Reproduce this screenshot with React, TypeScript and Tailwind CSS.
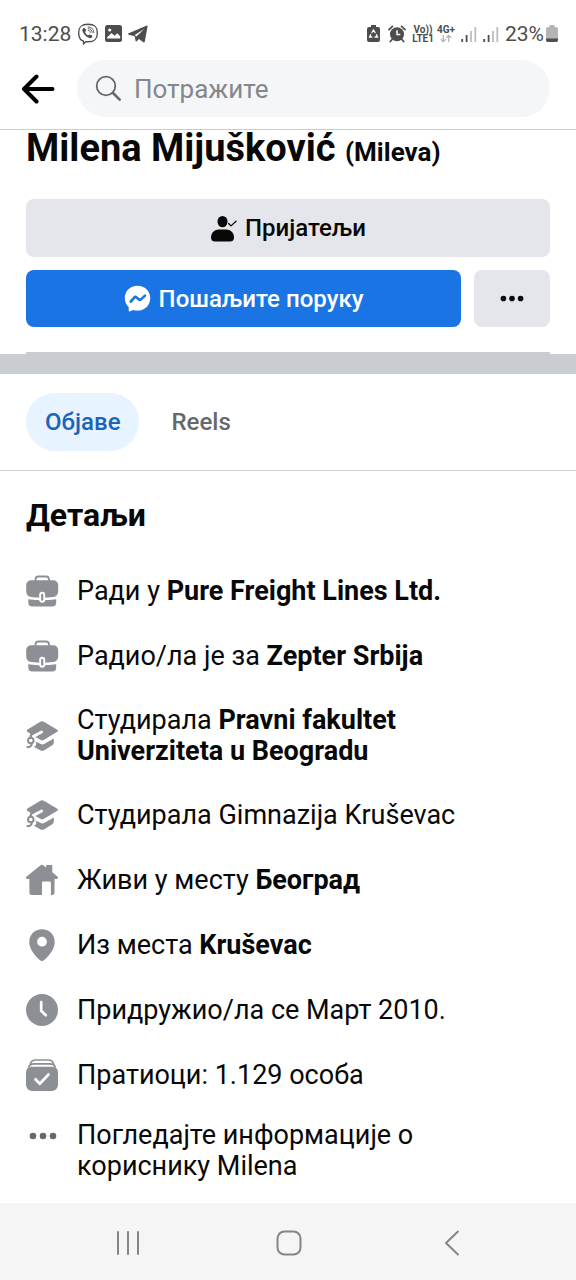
import type { ReactNode } from "react";

const BriefcaseIcon = () => (
  <svg viewBox="0 0 33 33" className="size-[33px]" fill="#8c8f94" aria-hidden="true">
    <path d="M9.500 6V4.500a3 3 0 0 1 3-3h7.500a3 3 0 0 1 3 3V6" fill="none" stroke="#8c8f94" strokeWidth="1.800" />
    <path d="M5 5.300h22.500A4.700 4.700 0 0 1 32.200 10v6.500c0 3-2 5.200-5 5.500-7.500.9-14.600.9-22.100 0-3-.3-4.900-2.500-4.900-5.500V10A4.700 4.700 0 0 1 5 5.300z" />
    <path d="M2.300 24.200c9.300 1.400 18.600 1.400 27.900 0v3.300a4 4 0 0 1-4 4H6.300a4 4 0 0 1-4-4z" />
    <rect x="13.200" y="16.800" width="6" height="11" rx="3" fill="#fff" />
    <rect x="15.100" y="18.800" width="2.200" height="7" rx="1.100" />
  </svg>
);

const GraduationIcon = () => (
  <svg viewBox="0 0 33 33" className="size-[33px]" fill="#8c8f94" aria-hidden="true">
    <path d="M1.500 9.600 14.800 1.600a3 3 0 0 1 3 .1l13.500 8a1.200 1.200 0 0 1 0 2.100l-13.800 8.300a2.800 2.800 0 0 1-2.700 0l-5.500-3 7-3.800a1.400 1.400 0 0 0-1.300-2.500L6.800 15 1.500 11.900a1.300 1.300 0 0 1 0-2.300z" />
    <path d="M9 21.300l5.300 2.500a4.500 4.500 0 0 0 4.300 0l9.200-5.400v4.200a3 3 0 0 1-1.500 2.600l-8.100 5a4 4 0 0 1-4 0l-6.400-3.500a3 3 0 0 0 1.200-5.400z" />
    <circle cx="4.800" cy="20.500" r="2.800" fill="none" stroke="#8c8f94" strokeWidth="2" />
    <path d="M4.600 17.700c-.1-2 .6-3.400 2.300-4.400M5.600 23.200c.3 2-.6 3.800-4 4" fill="none" stroke="#8c8f94" strokeWidth="2.200" strokeLinecap="round" />
  </svg>
);

const HomeIcon = () => (
  <svg viewBox="0 0 33 33" className="size-[33px]" fill="#8c8f94" aria-hidden="true">
    <path d="M14.300 1.500a2.700 2.700 0 0 1 3.300 0l2.500 2V2c0-.6.400-1 1-1h4.200c.6 0 1 .4 1 1v6.300l5 4.300c1.200 1 .7 2.500-.8 2.500h-2v14a1.800 1.800 0 0 1-1.800 1.800h-1.800V18.800c0-.8-.5-1.300-1.300-1.300h-6.300c-.8 0-1.300.5-1.300 1.300v12.100H5.200a1.800 1.800 0 0 1-1.800-1.800v-14h-2c-1.500 0-2-1.500-.8-2.500z" />
  </svg>
);

const PinIcon = () => (
  <svg viewBox="0 0 33 33" className="size-[33px]" fill="#8c8f94" aria-hidden="true">
    <path fillRule="evenodd" d="M16 .300C8.800.300 3.300 5.700 3.300 12.700c0 7.300 5.200 13.400 10.500 18.400a3.200 3.200 0 0 0 4.400 0c5.300-5 10.500-11.100 10.500-18.400C28.700 5.700 23.200.300 16 .300zm0 17.300a4.900 4.900 0 1 1 0-9.800 4.900 4.900 0 0 1 0 9.800z" />
  </svg>
);

const ClockIcon = () => (
  <svg viewBox="0 0 33 33" className="size-[33px]" aria-hidden="true">
    <circle cx="16" cy="16" r="16" fill="#8c8f94" />
    <path d="M15.200 8v8.700l4.600 4.600" fill="none" stroke="#fff" strokeWidth="2.700" strokeLinecap="round" strokeLinejoin="round" />
  </svg>
);

const FollowersIcon = () => (
  <svg viewBox="0 0 33 33" className="size-[33px]" aria-hidden="true">
    <path d="M4.200 5.500C4.900 2 6.700 1 9.700 1h12.600c3 0 4.800 1 5.500 4.500" fill="none" stroke="#8c8f94" strokeWidth="1.700" />
    <path d="M2.500 8.500c.7-2.600 2.700-3.700 6-3.700h15c3.300 0 5.300 1.100 6 3.700" fill="none" stroke="#8c8f94" strokeWidth="1.700" />
    <path d="M6.500 7.700h19c4.500 0 6.500 2 6.500 6.500v10.300c0 5-2.300 7.500-7.500 7.500h-17C2.300 32 0 29.500 0 24.500V14.200c0-4.500 2-6.500 6.500-6.500z" fill="#8c8f94" />
    <path d="M9.500 20.200l4.300 4.600 8.600-9.200" fill="none" stroke="#fff" strokeWidth="2.800" strokeLinecap="round" strokeLinejoin="round" />
  </svg>
);

const Dots = ({ className }: { className: string }) => (
  <svg viewBox="0 0 28 8" className={className} fill="currentColor" aria-hidden="true">
    <circle cx="4" cy="4" r="3.300" />
    <circle cx="14" cy="4" r="3.300" />
    <circle cx="24" cy="4" r="3.300" />
  </svg>
);

const Signal = () => (
  <svg viewBox="0 0 16 16" className="size-4" aria-hidden="true">
    <path d="M1.200 16v-3M5.600 16V9" stroke="#4d4d4d" strokeWidth="1.800" />
    <path d="M10 16V5M14.300 16V1" stroke="#bdbdbd" strokeWidth="1.800" />
  </svg>
);

const StatusBar = () => (
  <div className="flex h-[60px] items-center justify-between pt-[7px] pr-[18px] pl-[19px] text-[#4d4d4d]">
    <div className="flex items-center gap-[6px]">
      <span className="text-[21px] leading-6">13:28</span>
      <svg viewBox="0 0 22 22" className="size-[22px]" fill="none" stroke="currentColor" aria-hidden="true">
        <path d="M11 1.200c6.200 0 9.300 2 9.300 8.800s-3.100 8.800-9.300 8.800c-.8 0-1.500 0-2.200-.1L6.500 21v-2.800C3 17 1.700 14.500 1.700 10 1.700 3.200 4.800 1.200 11 1.200z" strokeWidth="1.400" strokeLinejoin="round" />
        <path d="M6.300 5.300c.9-.7 1.500-.3 2.200.8.800 1.100.8 1.700.1 2.200-.9.700-.4 1.500.6 2.600 1.200 1.300 2 1.800 2.700 1 .6-.7 1.200-.7 2.300.1 1.200.8 1.500 1.400.8 2.200-.9 1.200-1.900 1.300-3.300.6-2.900-1.500-4.900-3.700-6-6.400-.5-1.300-.3-2.400.6-3.100z" fill="currentColor" stroke="none" />
        <path d="M11.300 7.400c1.200.1 1.900.8 2 2M11.200 5.600c2.400.1 3.800 1.500 3.900 3.900M11.100 3.900c3.500.1 5.700 2.200 5.800 5.700" strokeWidth=".9" strokeLinecap="round" />
      </svg>
      <svg viewBox="0 0 17 17" className="size-[17px]" aria-hidden="true">
        <rect width="17" height="17" rx="2.500" fill="currentColor" />
        <path d="M2 12.500 6.500 8l3 2.800 2.700-2.600 3 3v2.300H2z" fill="#fff" />
        <circle cx="4.700" cy="5" r="1.600" fill="#fff" />
      </svg>
      <svg viewBox="0 0 20 18" className="h-[18px] w-5" fill="currentColor" aria-hidden="true">
        <path d="M.700 8.300 18.200.700c.9-.4 1.500.1 1.300 1L16.800 16.500c-.2 1-.9 1.200-1.700.6l-4.200-3.100-2.200 2.300c-.5.500-1 .3-1.100-.3l-.9-4.800L.8 9.700C-.1 9.400-.2 8.700.7 8.300zm7.700 3.300L16.200 4 6.700 9.900z" />
      </svg>
    </div>
    <div className="flex items-center">
      <svg viewBox="0 0 13 18" className="mr-2 h-[18px] w-[13px]" aria-hidden="true">
        <path d="M4 0h5v2h2a2 2 0 0 1 2 2v11a2 2 0 0 1-2 2H2a2 2 0 0 1-2-2V4a2 2 0 0 1 2-2h2z" fill="currentColor" />
        <path d="M4.600 8 6.500 5l1.900 3M9.300 9.300l1.200 2.700H7.500M5.300 12H2.600l1.200-2.700" fill="none" stroke="#fff" strokeWidth="1.300" />
      </svg>
      <svg viewBox="0 0 18 18" className="mr-[6px] size-[18px]" aria-hidden="true">
        <circle cx="9" cy="9.300" r="7" fill="currentColor" />
        <path d="M1 4.600 4.400 1.400M17 4.600l-3.400-3.200M4 14.500l-1.700 2M14 14.500l1.700 2" stroke="currentColor" strokeWidth="1.800" strokeLinecap="round" />
        <path d="M9 5.300v4.300h3.300" fill="none" stroke="#fff" strokeWidth="1.500" />
      </svg>
      <span className="mr-[3px] flex flex-col items-center text-[10px] leading-[9px] font-bold">
        <span>Vo))</span>
        <span>LTE1</span>
      </span>
      <span className="mr-[6px] flex flex-col items-center text-[10px] leading-[9px] font-bold">
        <span>4G+</span>
        <svg viewBox="0 0 12 9" className="h-[9px] w-3" fill="none" stroke="#b5b5b5" strokeWidth="1.300" aria-hidden="true">
          <path d="M3.300 1v6.500M.8 5.200l2.500 2.500 2.500-2.500M8.700 8V1.500M6.200 3.800l2.500-2.500 2.500 2.500" />
        </svg>
      </span>
      <div className="flex gap-[6px]">
        <Signal />
        <Signal />
      </div>
      <span className="ml-[6px] text-[21px] leading-6">23%</span>
      <svg viewBox="0 0 12 18" className="ml-[2px] h-[18px] w-3" aria-hidden="true">
        <path d="M3.500 0h5v2H10a2 2 0 0 1 2 2v11a2 2 0 0 1-2 2H2a2 2 0 0 1-2-2V4a2 2 0 0 1 2-2h1.500z" fill="#b5b5b5" />
        <path d="M0 13.500h12V15a2 2 0 0 1-2 2H2a2 2 0 0 1-2-2z" fill="#4d4d4d" />
      </svg>
    </div>
  </div>
);

const details: { icon: ReactNode; text: string; strong?: string }[] = [
  { icon: <BriefcaseIcon />, text: "Ради у ", strong: "Pure Freight Lines Ltd." },
  { icon: <BriefcaseIcon />, text: "Радио/ла је за ", strong: "Zepter Srbija" },
  { icon: <GraduationIcon />, text: "Студирала ", strong: "Pravni fakultet Univerziteta u Beogradu" },
  { icon: <GraduationIcon />, text: "Студирала Gimnazija Kruševac" },
  { icon: <HomeIcon />, text: "Живи у месту ", strong: "Београд" },
  { icon: <PinIcon />, text: "Из места ", strong: "Kruševac" },
  { icon: <ClockIcon />, text: "Придружио/ла се Март 2010." },
  { icon: <FollowersIcon />, text: "Пратиоци: 1.129 особа" },
];

export default function App() {
  return (
    <div className="flex min-h-screen flex-col bg-white font-['Roboto','Noto_Sans',sans-serif] text-[#080809]">
      <StatusBar />

      <header className="flex items-center gap-[22px] border-b border-[#c9ccd1] pr-[26px] pb-3 pl-[21px]">
        <button type="button" aria-label="Назад">
          <svg viewBox="0 0 34 30" className="h-[30px] w-[34px]" fill="none" stroke="#000" strokeWidth="4" strokeLinecap="round" strokeLinejoin="round" aria-hidden="true">
            <path d="M15.500 2.500 3 15l12.500 12.500M3 15h28.500" />
          </svg>
        </button>
        <label className="flex h-[57px] min-w-0 flex-1 items-center gap-3 rounded-full bg-[#f5f6f8] px-[18px]">
          <svg viewBox="0 0 27 27" className="size-[27px] shrink-0" fill="none" stroke="#65686c" strokeLinecap="round" aria-hidden="true">
            <circle cx="11" cy="11" r="9.300" strokeWidth="1.800" />
            <path d="M18 18l6.700 6.700" strokeWidth="2.600" />
          </svg>
          <input type="search" aria-label="Потражите" placeholder="Потражите" className="min-w-0 flex-1 bg-transparent text-[26px] leading-8 outline-none placeholder:text-[#85878b]" />
        </label>
      </header>

      <section className="px-[26px]">
        <h1 className="text-[38px] leading-9 font-bold">
          Milena Mijušković <span className="text-[26px]">(Mileva)</span>
        </h1>
        <button type="button" className="mt-[29px] flex h-[58px] w-full items-center justify-center gap-2 rounded-lg bg-[#e4e6eb] text-[24px] font-medium">
          <svg viewBox="0 0 27 27" className="size-[27px]" aria-hidden="true">
            <ellipse cx="12.500" cy="6.600" rx="5" ry="5.700" fill="#080809" />
            <path d="M1 22.500c0-5 3.500-8 8-8h7c4.500 0 8 3 8 8 0 2.500-1.300 4-4 4H5c-2.700 0-4-1.500-4-4z" fill="#080809" />
            <path d="M18.600 8.500l2.400 2.400 5-4.700" fill="none" stroke="#080809" strokeWidth="1.300" strokeLinecap="round" strokeLinejoin="round" />
          </svg>
          Пријатељи
        </button>
        <div className="mt-[13px] flex gap-[13px]">
          <button type="button" className="flex h-[57px] flex-1 items-center justify-center gap-2 rounded-lg bg-[#1b74e4] text-[24px] font-medium text-white">
            <svg viewBox="0 0 27 27" className="size-[27px]" aria-hidden="true">
              <path d="M13.500.800C6.300.800.800 6 .800 13.200c0 3.600 1.500 6.600 3.900 8.800v3.200c0 1 .8 1.500 1.700 1.100l2.700-1.400c1.400.5 2.800.7 4.400.7 7.200 0 12.700-5.200 12.700-12.400S20.700.8 13.500.8z" fill="#fff" />
              <path d="M6.800 16.700l3.600-4.300c.5-.6 1.200-.7 1.800-.2l2.800 2.400c.5.500 1.100.5 1.700 0l4.300-4" fill="none" stroke="#1b74e4" strokeWidth="2.600" strokeLinecap="round" strokeLinejoin="round" />
            </svg>
            Пошаљите поруку
          </button>
          <button type="button" aria-label="Још опција" className="flex w-[76px] items-center justify-center rounded-lg bg-[#e4e6eb]">
            <Dots className="h-[7px] w-6" />
          </button>
        </div>
        <div className="mt-[25px] h-0.5 bg-[#c9ccd1]" />
      </section>
      <div className="h-5 bg-[#c9ccd1]" />

      <nav className="flex items-center gap-[13px] border-b border-[#cfd1d4] px-[26px] py-[19px] text-[24px] leading-6 font-medium">
        <a href="#posts" aria-current="page" className="flex h-[58px] items-center rounded-full bg-[#e7f3ff] px-[19px] text-[#1c63ba]">Објаве</a>
        <a href="#reels" className="flex h-[58px] items-center px-[19px] text-[#65686c]">Reels</a>
      </nav>

      <main className="px-[26px] pb-5">
        <h2 className="pt-[26px] text-[32px] leading-9 font-bold">Детаљи</h2>
        <ul className="mt-[42px] flex flex-col gap-8 text-[27px] leading-[31px]">
          {details.map((item, i) => (
            <li key={i} className="flex items-center gap-[18px]">
              <span className="shrink-0">{item.icon}</span>
              <span className="max-w-[400px]">
                {item.text}
                {item.strong && <strong className="font-bold">{item.strong}</strong>}
              </span>
            </li>
          ))}
        </ul>
        <a href="#about" className="mt-7 flex gap-[18px] text-[27px] leading-[31px]">
          <span className="flex h-[31px] w-[33px] shrink-0 items-center justify-center text-[#65686c]">
            <Dots className="h-2 w-7" />
          </span>
          <span className="max-w-[400px]">Погледајте информације о кориснику Milena</span>
        </a>
      </main>

      <footer className="mt-auto flex h-[77px] items-center justify-around bg-[#f5f5f5] px-[46px] pt-[3px] text-[#858585]">
        <button type="button" aria-label="Недавне апликације">
          <svg viewBox="0 0 26 26" className="size-[26px]" fill="none" stroke="currentColor" strokeWidth="2" strokeLinecap="round" aria-hidden="true">
            <path d="M5 2v22M15 2v22M25 2v22" />
          </svg>
        </button>
        <button type="button" aria-label="Почетна">
          <svg viewBox="0 0 28 26" className="h-[26px] w-7" fill="none" stroke="currentColor" strokeWidth="2" aria-hidden="true">
            <rect x="3.500" y="1.500" width="23" height="23" rx="7" />
          </svg>
        </button>
        <button type="button" aria-label="Претходно">
          <svg viewBox="0 0 26 26" className="size-[26px]" fill="none" stroke="currentColor" strokeWidth="2" strokeLinecap="round" strokeLinejoin="round" aria-hidden="true">
            <path d="M21 1.500 9 13l12 11.500" />
          </svg>
        </button>
      </footer>
    </div>
  );
}
